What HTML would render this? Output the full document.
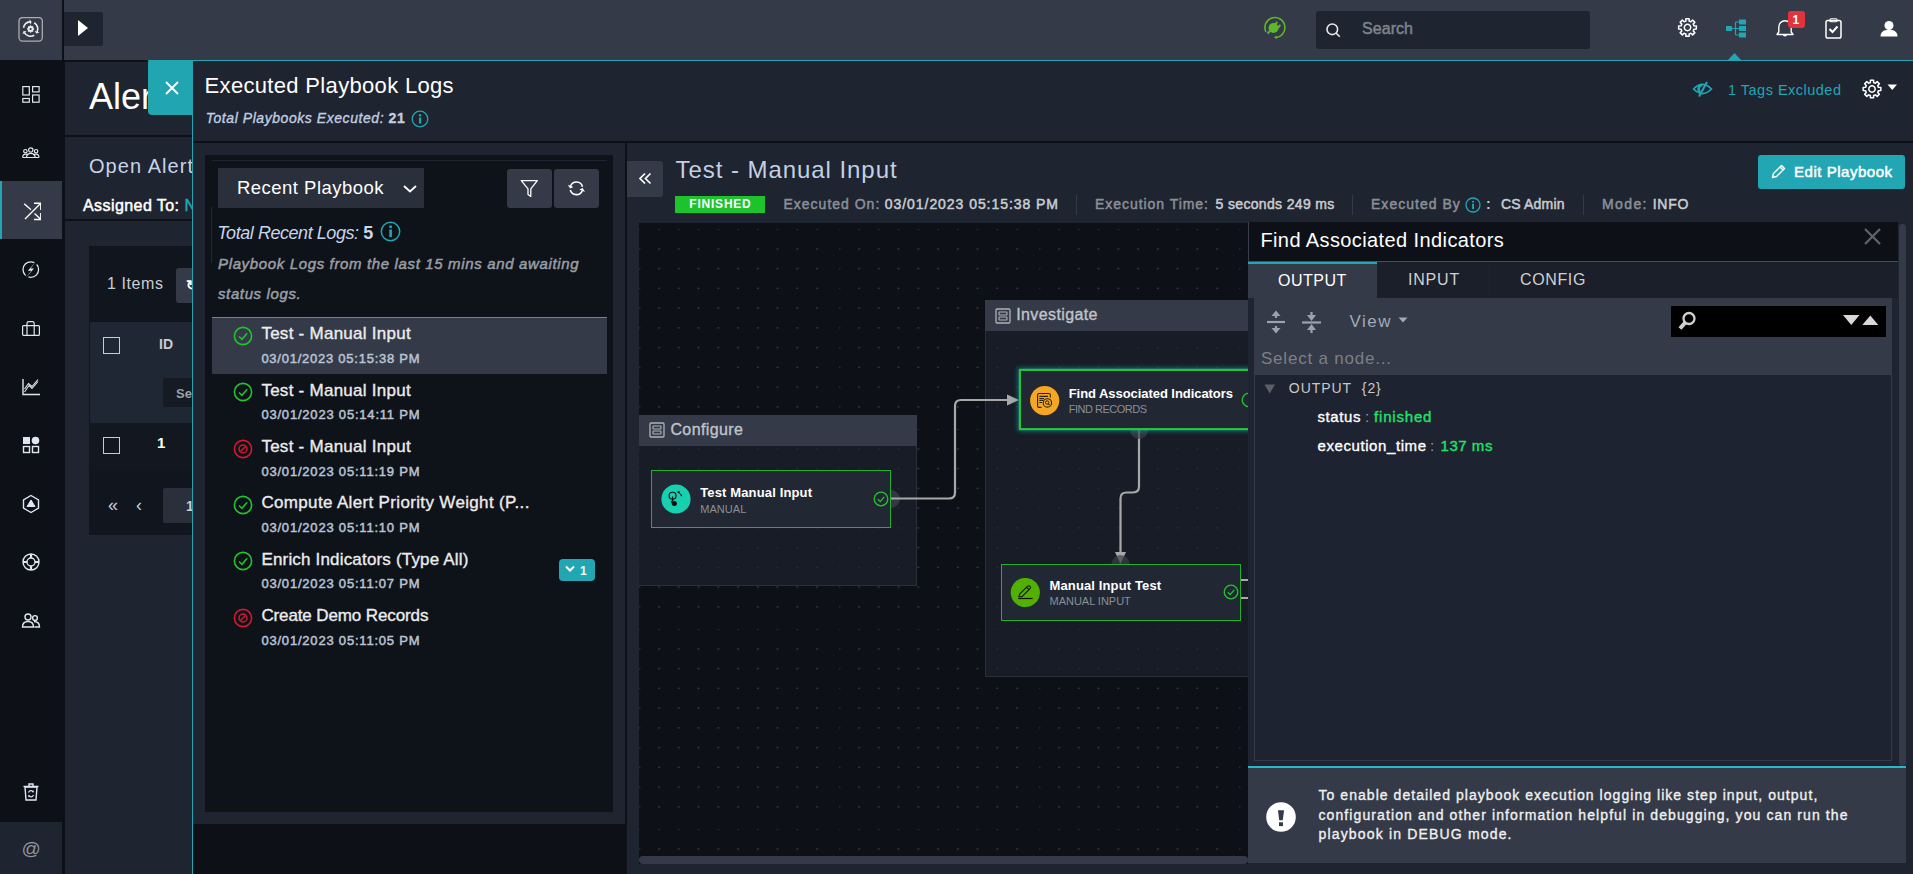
<!DOCTYPE html>
<html><head><meta charset="utf-8">
<style>
*{box-sizing:border-box;margin:0;padding:0}
html,body{width:1913px;height:874px;overflow:hidden;background:#1e2430;font-family:"Liberation Sans",sans-serif;color:#fff}
.r{position:absolute}
.t{position:absolute;line-height:1;white-space:nowrap}
</style></head><body>
<div class="r" style="left:0px;top:0px;width:1913px;height:60px;background:#343a47;"></div>
<div class="r" style="left:0px;top:60px;width:1913px;height:2px;background:#0d1117;"></div>
<div class="r" style="left:62px;top:0px;width:2px;height:60px;background:#0d1117;"></div>
<svg class="r" style="left:18px;top:17px;" width="26" height="26" viewBox="0 0 26 26"><rect x="1" y="0.5" width="23.3" height="23.6" rx="3.5" fill="none" stroke="#a9adb4" stroke-width="1.3"/><path d="M5.51 10.75 A7.2 7.2 0 0 1 11.97 4.83" fill="none" stroke="#eceef0" stroke-width="1.6"/><path d="M13.73 4.89 L11.41 2.27 L12.04 7.43Z" fill="#eceef0"/><path d="M16.20 5.76 A7.2 7.2 0 0 1 19.13 15.04" fill="none" stroke="#eceef0" stroke-width="1.6"/><path d="M18.20 16.53 L21.62 15.83 L16.83 13.80Z" fill="#eceef0"/><path d="M16.20 18.24 A7.2 7.2 0 0 1 6.36 15.60" fill="none" stroke="#eceef0" stroke-width="1.6"/><path d="M5.68 13.98 L4.29 17.19 L8.70 14.44Z" fill="#eceef0"/><path d="M12.60 8.10 L13.71 9.32 L15.36 9.24 L15.28 10.89 L16.50 12.00 L15.28 13.11 L15.36 14.76 L13.71 14.68 L12.60 15.90 L11.49 14.68 L9.84 14.76 L9.92 13.11 L8.70 12.00 L9.92 10.89 L9.84 9.24 L11.49 9.32Z" fill="#eceef0"/><circle cx="12.6" cy="12.0" r="1.1" fill="#343a47"/></svg>
<div class="r" style="left:64px;top:12px;width:39px;height:34px;background:#1e2430;border-radius:0 2px 2px 0"></div>
<svg class="r" style="left:77px;top:19px;" width="13" height="18" viewBox="0 0 13 18"><path d="M1 1 L11 9 L1 17Z" fill="#fff"/></svg>
<svg class="r" style="left:1262px;top:16px;" width="24" height="23" viewBox="0 0 24 23"><path d="M4 16 A10 10 0 1 1 13 21.5" fill="none" stroke="#5cb82a" stroke-width="1.6"/><path d="M12 21.5 L14.5 19.5 L14.5 23Z" fill="#5cb82a"/><circle cx="11.5" cy="12" r="5" fill="#5cb82a"/><rect x="13" y="5.5" width="2" height="4" fill="#5cb82a" transform="rotate(40 14 7.5)"/><rect x="16" y="8.5" width="2" height="4" fill="#5cb82a" transform="rotate(40 17 10.5)"/><path d="M8 15 L5.5 17.5" stroke="#5cb82a" stroke-width="2"/></svg>
<div class="r" style="left:1316px;top:11px;width:274px;height:38px;background:#1e2430;border-radius:3px"></div>
<svg class="r" style="left:1326px;top:23px;" width="15" height="15" viewBox="0 0 15 15"><circle cx="6.3" cy="6.3" r="5.3" fill="none" stroke="#e8e8e8" stroke-width="1.6"/><path d="M10 10 L13.8 13.8" stroke="#e8e8e8" stroke-width="1.6"/></svg>
<div class="t" style="left:1362px;top:20.66px;font-size:16px;color:#7d838c;font-weight:400;letter-spacing:0.059px;-webkit-text-stroke:0.5px currentColor;">Search</div>
<svg class="r" style="left:1676.8px;top:17px;" width="21" height="21" viewBox="0 0 21 21"><g transform="translate(10.5 10.5)"><path d="M-2.14 -6.24 L-1.64 -6.39 L-1.58 -8.86 L1.58 -8.86 L1.64 -6.39 L2.14 -6.24 L2.90 -5.93 L3.36 -5.68 L5.15 -7.38 L7.38 -5.15 L5.68 -3.36 L5.93 -2.90 L6.24 -2.14 L6.39 -1.64 L8.86 -1.58 L8.86 1.58 L6.39 1.64 L6.24 2.14 L5.93 2.90 L5.68 3.36 L7.38 5.15 L5.15 7.38 L3.36 5.68 L2.90 5.93 L2.14 6.24 L1.64 6.39 L1.58 8.86 L-1.58 8.86 L-1.64 6.39 L-2.14 6.24 L-2.90 5.93 L-3.36 5.68 L-5.15 7.38 L-7.38 5.15 L-5.68 3.36 L-5.93 2.90 L-6.24 2.14 L-6.39 1.64 L-8.86 1.58 L-8.86 -1.58 L-6.39 -1.64 L-6.24 -2.14 L-5.93 -2.90 L-5.68 -3.36 L-7.38 -5.15 L-5.15 -7.38 L-3.36 -5.68 L-2.90 -5.93Z" fill="none" stroke="#fff" stroke-width="1.5" stroke-linejoin="round"/><circle r="3.2" fill="none" stroke="#fff" stroke-width="1.5"/></g></svg>
<svg class="r" style="left:1726px;top:19px;" width="21" height="19" viewBox="0 0 21 19"><rect x="0" y="7" width="6" height="5" fill="#22a6b3"/><rect x="13" y="0.5" width="7" height="5" fill="#22a6b3"/><rect x="13" y="7" width="7" height="5" fill="#22a6b3"/><rect x="13" y="13.5" width="7" height="5" fill="#22a6b3"/><path d="M6 9.5 H9.5 M9.5 3 V16 M9.5 3 H13 M9.5 9.5 H13 M9.5 16 H13" fill="none" stroke="#22a6b3" stroke-width="1.2"/></svg>
<svg class="r" style="left:1727px;top:53px;" width="16" height="8" viewBox="0 0 16 8"><path d="M0 8 L7.5 0 L15 8Z" fill="#22a6b3"/></svg>
<svg class="r" style="left:1775px;top:18px;" width="21" height="21" viewBox="0 0 21 21"><path d="M2 16.5 L3.8 14 L3.8 9 A6.2 6.2 0 0 1 16.2 9 L16.2 14 L18 16.5Z" fill="none" stroke="#fff" stroke-width="1.4" stroke-linejoin="round"/><path d="M8.3 16.5 A1.8 1.8 0 0 0 11.7 16.5" fill="none" stroke="#fff" stroke-width="1.4"/></svg>
<div class="r" style="left:1788px;top:11px;width:17px;height:17px;background:#e0333c;border-radius:3px"></div>
<div class="t" style="left:1792.5px;top:13.84px;font-size:12px;color:#fff;font-weight:700;">1</div>
<svg class="r" style="left:1825px;top:18px;" width="18" height="21" viewBox="0 0 18 21"><rect x="1" y="2.5" width="15" height="17.5" rx="1.8" fill="none" stroke="#fff" stroke-width="1.5"/><rect x="5" y="0.8" width="7" height="3" rx="1" fill="none" stroke="#fff" stroke-width="1.1"/><path d="M4.5 11 L7.5 14 L12.5 8.5" fill="none" stroke="#fff" stroke-width="2"/></svg>
<svg class="r" style="left:1880px;top:20px;" width="18" height="17" viewBox="0 0 18 17"><circle cx="9" cy="5.5" r="4.5" fill="#fff"/><path d="M0.5 16.5 Q0.5 11 6 10 L12 10 Q17.5 11 17.5 16.5Z" fill="#fff"/></svg>
<div class="r" style="left:0px;top:62px;width:65px;height:812px;background:#0d1117;"></div>
<div class="r" style="left:0px;top:181px;width:62px;height:58px;background:#343a47;"></div>
<div class="r" style="left:0px;top:181px;width:2px;height:58px;background:#22a6b3;"></div>
<div class="r" style="left:0px;top:822px;width:62px;height:52px;background:#1e2430;"></div>
<svg class="r" style="left:21.0px;top:84.0px;" width="20" height="20" viewBox="0 0 20 20"><rect x="1.8" y="2.6" width="6.5" height="8.4" fill="none" stroke="#dfe6f2" stroke-width="1.2"/><rect x="11.6" y="2.6" width="6.5" height="5.3" fill="none" stroke="#dfe6f2" stroke-width="1.2"/><rect x="1.8" y="14.5" width="6.5" height="3.7" fill="none" stroke="#dfe6f2" stroke-width="1.2"/><rect x="11.6" y="11" width="6.5" height="7.2" fill="none" stroke="#dfe6f2" stroke-width="1.2"/></svg>
<svg class="r" style="left:21.0px;top:147.0px;" width="20" height="12" viewBox="0 0 20 12"><circle cx="4.4" cy="4.2" r="1.7" fill="none" stroke="#dfe6f2" stroke-width="1.2"/><circle cx="9.8" cy="3.0" r="2.2" fill="none" stroke="#dfe6f2" stroke-width="1.2"/><circle cx="15.1" cy="4.2" r="1.7" fill="none" stroke="#dfe6f2" stroke-width="1.2"/><path d="M1.6 10.4 Q1.8 7.1 4.6 7.1 Q6.5 7.1 7.2 8.3 M18 10.4 Q17.8 7.1 15 7.1 Q13.1 7.1 12.4 8.3 M5.4 10.4 Q5.8 6.4 9.8 6.4 Q13.8 6.4 14.2 10.4 M1.4 10.5 H18.2" fill="none" stroke="#dfe6f2" stroke-width="1.2"/></svg>
<svg class="r" style="left:21.0px;top:201.0px;" width="20" height="20" viewBox="0 0 20 20"><path d="M4 18 L19.5 2.5 M13 2.2 H19.8 V9 M3.2 2.8 L10 8.8 M13.5 12.5 L19.5 18 M13 18.5 H19.8 V12" fill="none" stroke="#fff" stroke-width="1.4"/></svg>
<svg class="r" style="left:21.0px;top:260.0px;" width="20" height="20" viewBox="0 0 20 20"><circle cx="9.8" cy="9.6" r="7.8" fill="none" stroke="#dfe6f2" stroke-width="1.3"/><path d="M16.5 0.5 L4.5 18.5" stroke="#0d1117" stroke-width="3"/><path d="M15.2 1.2 L6.8 10.8 H10.2 L4.6 18 L13 8.4 H9.6Z" fill="#dfe6f2"/></svg>
<svg class="r" style="left:21.0px;top:319.0px;" width="20" height="20" viewBox="0 0 20 20"><rect x="1.6" y="6.6" width="16.8" height="9.8" rx="1" fill="none" stroke="#dfe6f2" stroke-width="1.2"/><path d="M6 6.6 V4.4 Q6 2.6 7.8 2.6 H11.4 Q13.2 2.6 13.2 4.4 V6.6 M6 6.6 V16.4 M13.2 6.6 V16.4" fill="none" stroke="#dfe6f2" stroke-width="1.2"/></svg>
<svg class="r" style="left:21.0px;top:377.0px;" width="20" height="20" viewBox="0 0 20 20"><path d="M2 2 V17.5 H19" fill="none" stroke="#dfe6f2" stroke-width="1.4"/><path d="M3.5 15 L8 8.5 L11 11.5 L17 4.5 M3.5 12 L7.5 6.5 L11 9.5 L17 2.5" fill="none" stroke="#dfe6f2" stroke-width="1.1"/></svg>
<svg class="r" style="left:21.0px;top:435.0px;" width="20" height="20" viewBox="0 0 20 20"><rect x="2" y="2" width="7" height="7" fill="#dfe6f2"/><circle cx="14.5" cy="5.5" r="3.8" fill="#dfe6f2"/><rect x="2.5" y="11.5" width="6" height="6" fill="none" stroke="#dfe6f2" stroke-width="1.4"/><rect x="11.5" y="11.5" width="6" height="6" fill="none" stroke="#dfe6f2" stroke-width="1.4"/></svg>
<svg class="r" style="left:21.0px;top:494.0px;" width="20" height="20" viewBox="0 0 20 20"><path d="M10 1.5 L17.5 5.8 V14.2 L10 18.5 L2.5 14.2 V5.8Z" fill="none" stroke="#dfe6f2" stroke-width="1.4"/><path d="M10 6 L14 12.5 H6Z M10 6 V10 L6 12.5 M10 10 L14 12.5" fill="#dfe6f2" stroke="#dfe6f2" stroke-width="1"/></svg>
<svg class="r" style="left:21.0px;top:552.0px;" width="20" height="20" viewBox="0 0 20 20"><circle cx="10" cy="10" r="8" fill="none" stroke="#dfe6f2" stroke-width="1.4"/><circle cx="10" cy="10" r="4" fill="none" stroke="#dfe6f2" stroke-width="1.4"/><path d="M10 2 V6 M10 14 V18 M2 10 H6 M14 10 H18" fill="none" stroke="#dfe6f2" stroke-width="2.2"/></svg>
<svg class="r" style="left:21.0px;top:611.0px;" width="20" height="20" viewBox="0 0 20 20"><circle cx="7" cy="6" r="3" fill="none" stroke="#dfe6f2" stroke-width="1.4"/><circle cx="14" cy="7" r="2.4" fill="none" stroke="#dfe6f2" stroke-width="1.4"/><path d="M1.5 16 Q1.5 10.5 7 10.5 Q12.5 10.5 12.5 16Z M13 10.5 Q18.5 10.5 18.5 16 H13.5" fill="none" stroke="#dfe6f2" stroke-width="1.4"/></svg>
<svg class="r" style="left:21.0px;top:782.0px;" width="20" height="20" viewBox="0 0 20 20"><path d="M4 5 H16 L15 18 H5Z" fill="none" stroke="#dfe6f2" stroke-width="1.4"/><path d="M2.5 4.5 H17.5 M8 4.5 V2 H12 V4.5" fill="none" stroke="#dfe6f2" stroke-width="1.4"/><path d="M7.5 10.5 A2.6 2.6 0 0 1 12.3 10 M12.5 13 A2.6 2.6 0 0 1 7.7 13.5" fill="none" stroke="#dfe6f2" stroke-width="1.1"/><path d="M12.8 8.3 L12.6 10.6 L10.6 10Z M7.2 15.2 L7.4 12.9 L9.4 13.5Z" fill="#dfe6f2"/></svg>
<div class="t" style="left:21.5px;top:838.92px;font-size:19px;color:#8e949c;font-weight:400;">@</div>
<div class="r" style="left:65px;top:62px;width:127px;height:812px;background:#1e2430;"></div>
<div class="r" style="left:65px;top:135px;width:127px;height:2px;background:#0d1117;"></div>
<div class="r" style="left:65px;top:219px;width:127px;height:2px;background:#0d1117;"></div>
<div class="t" style="left:89px;top:78.53px;font-size:36px;color:#fff;font-weight:400;">Alerts</div>
<div class="t" style="left:89px;top:156.07px;font-size:20px;color:#c8d3e8;font-weight:400;letter-spacing:1.055px;">Open Alert</div>
<div class="t" style="left:83px;top:197.96px;font-size:16px;color:#fff;font-weight:400;letter-spacing:0.424px;-webkit-text-stroke:0.5px currentColor;">Assigned To:</div>
<div class="t" style="left:184.5px;top:197.96px;font-size:16px;color:#22a6b3;font-weight:400;-webkit-text-stroke:0.5px currentColor;">None</div>
<div class="r" style="left:89px;top:246px;width:110px;height:289px;background:#11161e;"></div>
<div class="t" style="left:107px;top:276.46px;font-size:16px;color:#c8ccd2;font-weight:400;letter-spacing:0.588px;">1 Items</div>
<div class="r" style="left:176px;top:268px;width:30px;height:35px;background:#343a47;border-radius:3px"></div>
<div class="t" style="left:186px;top:278.15px;font-size:14px;color:#fff;font-weight:700;">↻</div>
<div class="r" style="left:90px;top:322px;width:110px;height:101px;background:#1e2733;"></div>
<div class="r" style="left:103px;top:337px;width:17px;height:17px;background:none;border:1.3px solid #c8ccd2"></div>
<div class="t" style="left:159px;top:337.15px;font-size:14px;color:#c8ccd2;font-weight:700;">ID</div>
<div class="r" style="left:163px;top:378px;width:40px;height:29px;background:#161b23;border-radius:2px"></div>
<div class="t" style="left:176px;top:387.00px;font-size:13px;color:#9aa0aa;font-weight:700;">Search</div>
<div class="r" style="left:90px;top:423px;width:110px;height:48px;background:#121720;"></div>
<div class="r" style="left:103px;top:437px;width:17px;height:17px;background:none;border:1.3px solid #c8ccd2"></div>
<div class="t" style="left:157px;top:435.30px;font-size:15px;color:#fff;font-weight:700;">1</div>
<div class="t" style="left:108px;top:495.76px;font-size:18px;color:#c8ccd2;font-weight:400;">«</div>
<div class="t" style="left:136px;top:495.76px;font-size:18px;color:#c8ccd2;font-weight:400;">‹</div>
<div class="r" style="left:163px;top:488px;width:40px;height:35px;background:#2a303b;border-radius:2px"></div>
<div class="t" style="left:186px;top:499.15px;font-size:14px;color:#c8ccd2;font-weight:700;">1</div>
<div class="r" style="left:148px;top:60px;width:1765px;height:1px;background:#22a6b3;"></div>
<div class="r" style="left:192px;top:61px;width:1721px;height:813px;background:#1e2430;"></div>
<div class="r" style="left:192px;top:60px;width:1px;height:814px;background:#22a6b3;"></div>
<div class="r" style="left:148px;top:60px;width:45px;height:55px;background:#21a5b0;border-radius:3px 0 0 4px"></div>
<svg class="r" style="left:164px;top:80px;" width="16" height="16" viewBox="0 0 16 16"><path d="M2 2 L14 14 M14 2 L2 14" stroke="#fff" stroke-width="1.8"/></svg>
<div class="t" style="left:204.6px;top:75.38px;font-size:22px;color:#fff;font-weight:400;letter-spacing:0.326px;">Executed Playbook Logs</div>
<div class="t" style="left:205.7px;top:110.95px;font-size:14px;color:#c0cde0;font-weight:400;font-style:italic;letter-spacing:0.557px;-webkit-text-stroke:0.35px currentColor;">Total Playbooks Executed: <b style="font-style:normal">21</b></div>
<svg class="r" style="left:411px;top:110px;" width="18" height="18" viewBox="0 0 18 18"><circle cx="9" cy="9" r="7.8" fill="none" stroke="#22a6b3" stroke-width="1.3"/><rect x="8" y="7.5" width="2.2" height="6" fill="#22a6b3"/><circle cx="9.1" cy="5.2" r="1.2" fill="#22a6b3"/></svg>
<svg class="r" style="left:1692px;top:81px;" width="22" height="16" viewBox="0 0 22 16"><path d="M1.5 8 Q10.5 -1 19.5 8 Q10.5 17 1.5 8Z" fill="none" stroke="#22a6b3" stroke-width="1.7"/><path d="M10.5 4 A4 4 0 0 0 8 11" fill="none" stroke="#22a6b3" stroke-width="2.5"/><path d="M15 1 L7 15.5" stroke="#22a6b3" stroke-width="2"/></svg>
<div class="t" style="left:1728px;top:82.53px;font-size:14.5px;color:#22a6b3;font-weight:400;letter-spacing:0.489px;">1 Tags Excluded</div>
<svg class="r" style="left:1861px;top:78px;" width="22" height="22" viewBox="0 0 22 22"><g transform="translate(11 11)"><path d="M-2.14 -6.24 L-1.64 -6.39 L-1.58 -8.86 L1.58 -8.86 L1.64 -6.39 L2.14 -6.24 L2.90 -5.93 L3.36 -5.68 L5.15 -7.38 L7.38 -5.15 L5.68 -3.36 L5.93 -2.90 L6.24 -2.14 L6.39 -1.64 L8.86 -1.58 L8.86 1.58 L6.39 1.64 L6.24 2.14 L5.93 2.90 L5.68 3.36 L7.38 5.15 L5.15 7.38 L3.36 5.68 L2.90 5.93 L2.14 6.24 L1.64 6.39 L1.58 8.86 L-1.58 8.86 L-1.64 6.39 L-2.14 6.24 L-2.90 5.93 L-3.36 5.68 L-5.15 7.38 L-7.38 5.15 L-5.68 3.36 L-5.93 2.90 L-6.24 2.14 L-6.39 1.64 L-8.86 1.58 L-8.86 -1.58 L-6.39 -1.64 L-6.24 -2.14 L-5.93 -2.90 L-5.68 -3.36 L-7.38 -5.15 L-5.15 -7.38 L-3.36 -5.68 L-2.90 -5.93Z" fill="none" stroke="#fff" stroke-width="1.5" stroke-linejoin="round"/><circle r="3.2" fill="none" stroke="#fff" stroke-width="1.5"/></g></svg>
<svg class="r" style="left:1887px;top:84px;" width="11" height="7" viewBox="0 0 11 7"><path d="M0.5 0.5 H10 L5.25 6Z" fill="#fff"/></svg>
<div class="r" style="left:193px;top:141px;width:1720px;height:2px;background:#0d1117;"></div>
<div class="r" style="left:193px;top:824px;width:434px;height:50px;background:#0d1117;"></div>
<div class="r" style="left:625px;top:143px;width:2px;height:731px;background:#0d1117;"></div>
<div class="r" style="left:205px;top:155px;width:408px;height:657px;background:#0e1219;"></div>
<div class="r" style="left:212px;top:160px;width:395px;height:1px;background:#1f252e;"></div>
<div class="r" style="left:211px;top:207px;width:1px;height:56px;background:#1f2a33;"></div>
<div class="r" style="left:218px;top:168px;width:206px;height:40px;background:#2a303b;"></div>
<div class="t" style="left:237px;top:178.74px;font-size:18.5px;color:#fff;font-weight:400;letter-spacing:0.473px;">Recent Playbook</div>
<svg class="r" style="left:403px;top:185px;" width="14" height="8" viewBox="0 0 14 8"><path d="M1 1 L7 6.5 L13 1" fill="none" stroke="#fff" stroke-width="1.8"/></svg>
<div class="r" style="left:507px;top:169px;width:45px;height:39px;background:#343a47;border-radius:3px"></div>
<div class="r" style="left:554px;top:169px;width:45px;height:39px;background:#343a47;border-radius:3px"></div>
<svg class="r" style="left:519px;top:178px;" width="20" height="20" viewBox="0 0 20 20"><path d="M2.3 2.6 H18.3 L11.8 10.8 V18.4 L9 16.5 V10.8Z" fill="none" stroke="#fff" stroke-width="1.3" stroke-linejoin="round"/></svg>
<svg class="r" style="left:566px;top:179px;" width="21" height="20" viewBox="0 0 21 20"><path d="M4.48 7.15 A6.3 6.3 0 0 1 16.49 7.67" fill="none" stroke="#fff" stroke-width="1.6"/><path d="M4.10 9.52 L1.84 5.67 L7.36 8.01Z" fill="#fff"/><path d="M16.32 11.45 A6.3 6.3 0 0 1 4.31 10.93" fill="none" stroke="#fff" stroke-width="1.6"/><path d="M16.70 9.08 L18.96 12.93 L13.44 10.59Z" fill="#fff"/></svg>
<div class="t" style="left:217.2px;top:223.76px;font-size:18px;color:#c8d5ea;font-weight:400;font-style:italic;letter-spacing:-0.445px;">Total Recent Logs: <b style="font-style:normal">5</b></div>
<svg class="r" style="left:380px;top:221px;" width="21" height="21" viewBox="0 0 21 21"><circle cx="10.5" cy="10.5" r="9.2" fill="none" stroke="#22a6b3" stroke-width="1.5"/><rect x="9.3" y="8.5" width="2.6" height="7.5" fill="#22a6b3"/><circle cx="10.6" cy="5.8" r="1.5" fill="#22a6b3"/></svg>
<div class="t" style="left:218px;top:256.30px;font-size:15px;color:#9a9ea5;font-weight:400;font-style:italic;letter-spacing:0.645px;-webkit-text-stroke:0.5px currentColor;">Playbook Logs from the last 15 mins and awaiting</div>
<div class="t" style="left:218px;top:286.10px;font-size:15px;color:#9a9ea5;font-weight:400;font-style:italic;letter-spacing:0.621px;-webkit-text-stroke:0.5px currentColor;">status logs.</div>
<div class="r" style="left:212px;top:317px;width:395px;height:1px;background:#22a6b3;"></div>
<div class="r" style="left:212px;top:318px;width:395px;height:56px;background:#343a47;"></div>
<svg class="r" style="left:232.5px;top:325.9px;" width="20" height="20" viewBox="0 0 20 20"><circle cx="10" cy="10" r="8.6" fill="none" stroke="#22c32e" stroke-width="1.6"/><path d="M6 10.5 L9 13.3 L14.2 7.2" fill="none" stroke="#22c32e" stroke-width="1.5"/></svg>
<div class="t" style="left:261.4px;top:325.21px;font-size:17px;color:#ececec;font-weight:400;letter-spacing:0.262px;-webkit-text-stroke:0.35px currentColor;">Test - Manual Input</div>
<div class="t" style="left:261.4px;top:352.00px;font-size:13px;color:#b8c2d3;font-weight:400;letter-spacing:0.753px;-webkit-text-stroke:0.5px currentColor;">03/01/2023 05:15:38 PM</div>
<svg class="r" style="left:232.5px;top:382.25px;" width="20" height="20" viewBox="0 0 20 20"><circle cx="10" cy="10" r="8.6" fill="none" stroke="#22c32e" stroke-width="1.6"/><path d="M6 10.5 L9 13.3 L14.2 7.2" fill="none" stroke="#22c32e" stroke-width="1.5"/></svg>
<div class="t" style="left:261.4px;top:381.56px;font-size:17px;color:#ececec;font-weight:400;letter-spacing:0.262px;-webkit-text-stroke:0.35px currentColor;">Test - Manual Input</div>
<div class="t" style="left:261.4px;top:408.35px;font-size:13px;color:#b8c2d3;font-weight:400;letter-spacing:0.799px;-webkit-text-stroke:0.5px currentColor;">03/01/2023 05:14:11 PM</div>
<svg class="r" style="left:232.5px;top:438.59999999999997px;" width="20" height="20" viewBox="0 0 20 20"><circle cx="10" cy="10" r="8.6" fill="none" stroke="#cf1a30" stroke-width="1.6"/><circle cx="10" cy="10" r="4" fill="none" stroke="#cf1a30" stroke-width="1.5"/><path d="M7.2 12.8 L12.8 7.2" stroke="#cf1a30" stroke-width="1.5"/></svg>
<div class="t" style="left:261.4px;top:437.91px;font-size:17px;color:#ececec;font-weight:400;letter-spacing:0.262px;-webkit-text-stroke:0.35px currentColor;">Test - Manual Input</div>
<div class="t" style="left:261.4px;top:464.70px;font-size:13px;color:#b8c2d3;font-weight:400;letter-spacing:0.799px;-webkit-text-stroke:0.5px currentColor;">03/01/2023 05:11:19 PM</div>
<svg class="r" style="left:232.5px;top:494.95px;" width="20" height="20" viewBox="0 0 20 20"><circle cx="10" cy="10" r="8.6" fill="none" stroke="#22c32e" stroke-width="1.6"/><path d="M6 10.5 L9 13.3 L14.2 7.2" fill="none" stroke="#22c32e" stroke-width="1.5"/></svg>
<div class="t" style="left:261.4px;top:494.26px;font-size:17px;color:#ececec;font-weight:400;letter-spacing:0.342px;-webkit-text-stroke:0.35px currentColor;">Compute Alert Priority Weight (P...</div>
<div class="t" style="left:261.4px;top:521.05px;font-size:13px;color:#b8c2d3;font-weight:400;letter-spacing:0.799px;-webkit-text-stroke:0.5px currentColor;">03/01/2023 05:11:10 PM</div>
<svg class="r" style="left:232.5px;top:551.3px;" width="20" height="20" viewBox="0 0 20 20"><circle cx="10" cy="10" r="8.6" fill="none" stroke="#22c32e" stroke-width="1.6"/><path d="M6 10.5 L9 13.3 L14.2 7.2" fill="none" stroke="#22c32e" stroke-width="1.5"/></svg>
<div class="t" style="left:261.4px;top:550.61px;font-size:17px;color:#ececec;font-weight:400;letter-spacing:0.178px;-webkit-text-stroke:0.35px currentColor;">Enrich Indicators (Type All)</div>
<div class="t" style="left:261.4px;top:577.40px;font-size:13px;color:#b8c2d3;font-weight:400;letter-spacing:0.799px;-webkit-text-stroke:0.5px currentColor;">03/01/2023 05:11:07 PM</div>
<svg class="r" style="left:232.5px;top:607.65px;" width="20" height="20" viewBox="0 0 20 20"><circle cx="10" cy="10" r="8.6" fill="none" stroke="#cf1a30" stroke-width="1.6"/><circle cx="10" cy="10" r="4" fill="none" stroke="#cf1a30" stroke-width="1.5"/><path d="M7.2 12.8 L12.8 7.2" stroke="#cf1a30" stroke-width="1.5"/></svg>
<div class="t" style="left:261.4px;top:606.96px;font-size:17px;color:#ececec;font-weight:400;letter-spacing:-0.118px;-webkit-text-stroke:0.35px currentColor;">Create Demo Records</div>
<div class="t" style="left:261.4px;top:633.75px;font-size:13px;color:#b8c2d3;font-weight:400;letter-spacing:0.799px;-webkit-text-stroke:0.5px currentColor;">03/01/2023 05:11:05 PM</div>
<div class="r" style="left:559px;top:559px;width:36px;height:22px;background:#22a6b3;border-radius:4px"></div>
<svg class="r" style="left:565px;top:565px;" width="10" height="8" viewBox="0 0 10 8"><path d="M1 1.5 L5 5.5 L9 1.5" fill="none" stroke="#fff" stroke-width="2"/></svg>
<div class="t" style="left:580px;top:565.34px;font-size:12px;color:#fff;font-weight:700;">1</div>
<div class="r" style="left:627px;top:161px;width:36px;height:36px;background:#343a47;border-radius:0 3px 3px 0"></div>
<svg class="r" style="left:638px;top:172px;" width="14" height="13" viewBox="0 0 14 13"><path d="M7 1.5 L2 6.5 L7 11.5 M12.5 1.5 L7.5 6.5 L12.5 11.5" fill="none" stroke="#fff" stroke-width="1.7"/></svg>
<div class="t" style="left:675.6px;top:158.48px;font-size:24px;color:#c3d0e3;font-weight:400;letter-spacing:0.938px;">Test - Manual Input</div>
<div class="r" style="left:675px;top:196px;width:90px;height:17px;background:#1ec22d;"></div>
<div class="t" style="left:689.3px;top:197.84px;font-size:12px;color:#fff;font-weight:700;letter-spacing:0.784px;">FINISHED</div>
<div class="t" style="left:783.5px;top:197.15px;font-size:14px;color:#8a8f96;font-weight:400;letter-spacing:0.997px;-webkit-text-stroke:0.5px currentColor;">Executed On:</div>
<div class="t" style="left:884.8px;top:197.15px;font-size:14px;color:#c8ccd2;font-weight:400;letter-spacing:0.945px;-webkit-text-stroke:0.5px currentColor;">03/01/2023 05:15:38 PM</div>
<div class="r" style="left:1076px;top:195px;width:1px;height:20px;background:#343a47;"></div>
<div class="t" style="left:1095px;top:197.15px;font-size:14px;color:#8a8f96;font-weight:400;letter-spacing:0.956px;-webkit-text-stroke:0.5px currentColor;">Execution Time:</div>
<div class="t" style="left:1215.6px;top:197.15px;font-size:14px;color:#c8ccd2;font-weight:400;letter-spacing:0.338px;-webkit-text-stroke:0.5px currentColor;">5 seconds 249 ms</div>
<div class="r" style="left:1352px;top:195px;width:1px;height:20px;background:#343a47;"></div>
<div class="t" style="left:1371px;top:197.15px;font-size:14px;color:#8a8f96;font-weight:400;letter-spacing:1.02px;-webkit-text-stroke:0.5px currentColor;">Executed By</div>
<svg class="r" style="left:1465px;top:197px;" width="16" height="16" viewBox="0 0 16 16"><circle cx="8" cy="8" r="7" fill="none" stroke="#22a6b3" stroke-width="1.3"/><rect x="7.1" y="6.8" width="1.9" height="5.2" fill="#22a6b3"/><circle cx="8.05" cy="4.7" r="1.05" fill="#22a6b3"/></svg>
<div class="t" style="left:1486px;top:197.15px;font-size:14px;color:#c8ccd2;font-weight:700;">:</div>
<div class="t" style="left:1501px;top:197.15px;font-size:14px;color:#c8ccd2;font-weight:400;letter-spacing:0.178px;-webkit-text-stroke:0.5px currentColor;">CS Admin</div>
<div class="r" style="left:1583px;top:195px;width:1px;height:20px;background:#343a47;"></div>
<div class="t" style="left:1602px;top:197.15px;font-size:14px;color:#8a8f96;font-weight:400;letter-spacing:1.395px;-webkit-text-stroke:0.5px currentColor;">Mode:</div>
<div class="t" style="left:1652.8px;top:197.15px;font-size:14px;color:#c8ccd2;font-weight:400;letter-spacing:0.681px;-webkit-text-stroke:0.5px currentColor;">INFO</div>
<div class="r" style="left:1758px;top:155px;width:147px;height:34px;background:#22a6b3;border-radius:3px"></div>
<svg class="r" style="left:1770px;top:164px;" width="16" height="16" viewBox="0 0 16 16"><path d="M2.5 13.5 L3.5 9.5 L11.5 1.5 L14.5 4.5 L6.5 12.5Z M10 3 L13 6" fill="none" stroke="#fff" stroke-width="1.5" stroke-linejoin="round"/></svg>
<div class="t" style="left:1794px;top:164.30px;font-size:15px;color:#fff;font-weight:400;letter-spacing:0.523px;-webkit-text-stroke:0.5px currentColor;">Edit Playbook</div>
<div class="r" style="left:639px;top:223px;width:609px;height:641px;background:#0d1117;"></div>
<svg class="r" style="left:639px;top:223px;" width="609" height="641" viewBox="0 0 609 641"><defs><pattern id="dp" x="0.3" y="6.1" width="200" height="200" patternUnits="userSpaceOnUse"><g fill="#4a4f58"><rect x="-0.60" y="-0.60" width="1.3" height="1.3"/><rect x="-0.60" y="19.15" width="1.3" height="1.3"/><rect x="-0.60" y="38.90" width="1.3" height="1.3"/><rect x="-0.60" y="58.65" width="1.3" height="1.3"/><rect x="-0.60" y="78.40" width="1.3" height="1.3"/><rect x="-0.60" y="98.15" width="1.3" height="1.3"/><rect x="-0.60" y="117.90" width="1.3" height="1.3"/><rect x="-0.60" y="137.65" width="1.3" height="1.3"/><rect x="-0.60" y="157.40" width="1.3" height="1.3"/><rect x="-0.60" y="177.15" width="1.3" height="1.3"/><rect x="19.15" y="-0.60" width="1.3" height="1.3"/><rect x="19.15" y="19.15" width="1.3" height="1.3"/><rect x="19.15" y="38.90" width="1.3" height="1.3"/><rect x="19.15" y="58.65" width="1.3" height="1.3"/><rect x="19.15" y="78.40" width="1.3" height="1.3"/><rect x="19.15" y="98.15" width="1.3" height="1.3"/><rect x="19.15" y="117.90" width="1.3" height="1.3"/><rect x="19.15" y="137.65" width="1.3" height="1.3"/><rect x="19.15" y="157.40" width="1.3" height="1.3"/><rect x="19.15" y="177.15" width="1.3" height="1.3"/><rect x="38.90" y="-0.60" width="1.3" height="1.3"/><rect x="38.90" y="19.15" width="1.3" height="1.3"/><rect x="38.90" y="38.90" width="1.3" height="1.3"/><rect x="38.90" y="58.65" width="1.3" height="1.3"/><rect x="38.90" y="78.40" width="1.3" height="1.3"/><rect x="38.90" y="98.15" width="1.3" height="1.3"/><rect x="38.90" y="117.90" width="1.3" height="1.3"/><rect x="38.90" y="137.65" width="1.3" height="1.3"/><rect x="38.90" y="157.40" width="1.3" height="1.3"/><rect x="38.90" y="177.15" width="1.3" height="1.3"/><rect x="58.65" y="-0.60" width="1.3" height="1.3"/><rect x="58.65" y="19.15" width="1.3" height="1.3"/><rect x="58.65" y="38.90" width="1.3" height="1.3"/><rect x="58.65" y="58.65" width="1.3" height="1.3"/><rect x="58.65" y="78.40" width="1.3" height="1.3"/><rect x="58.65" y="98.15" width="1.3" height="1.3"/><rect x="58.65" y="117.90" width="1.3" height="1.3"/><rect x="58.65" y="137.65" width="1.3" height="1.3"/><rect x="58.65" y="157.40" width="1.3" height="1.3"/><rect x="58.65" y="177.15" width="1.3" height="1.3"/><rect x="78.40" y="-0.60" width="1.3" height="1.3"/><rect x="78.40" y="19.15" width="1.3" height="1.3"/><rect x="78.40" y="38.90" width="1.3" height="1.3"/><rect x="78.40" y="58.65" width="1.3" height="1.3"/><rect x="78.40" y="78.40" width="1.3" height="1.3"/><rect x="78.40" y="98.15" width="1.3" height="1.3"/><rect x="78.40" y="117.90" width="1.3" height="1.3"/><rect x="78.40" y="137.65" width="1.3" height="1.3"/><rect x="78.40" y="157.40" width="1.3" height="1.3"/><rect x="78.40" y="177.15" width="1.3" height="1.3"/><rect x="98.15" y="-0.60" width="1.3" height="1.3"/><rect x="98.15" y="19.15" width="1.3" height="1.3"/><rect x="98.15" y="38.90" width="1.3" height="1.3"/><rect x="98.15" y="58.65" width="1.3" height="1.3"/><rect x="98.15" y="78.40" width="1.3" height="1.3"/><rect x="98.15" y="98.15" width="1.3" height="1.3"/><rect x="98.15" y="117.90" width="1.3" height="1.3"/><rect x="98.15" y="137.65" width="1.3" height="1.3"/><rect x="98.15" y="157.40" width="1.3" height="1.3"/><rect x="98.15" y="177.15" width="1.3" height="1.3"/><rect x="117.90" y="-0.60" width="1.3" height="1.3"/><rect x="117.90" y="19.15" width="1.3" height="1.3"/><rect x="117.90" y="38.90" width="1.3" height="1.3"/><rect x="117.90" y="58.65" width="1.3" height="1.3"/><rect x="117.90" y="78.40" width="1.3" height="1.3"/><rect x="117.90" y="98.15" width="1.3" height="1.3"/><rect x="117.90" y="117.90" width="1.3" height="1.3"/><rect x="117.90" y="137.65" width="1.3" height="1.3"/><rect x="117.90" y="157.40" width="1.3" height="1.3"/><rect x="117.90" y="177.15" width="1.3" height="1.3"/><rect x="137.65" y="-0.60" width="1.3" height="1.3"/><rect x="137.65" y="19.15" width="1.3" height="1.3"/><rect x="137.65" y="38.90" width="1.3" height="1.3"/><rect x="137.65" y="58.65" width="1.3" height="1.3"/><rect x="137.65" y="78.40" width="1.3" height="1.3"/><rect x="137.65" y="98.15" width="1.3" height="1.3"/><rect x="137.65" y="117.90" width="1.3" height="1.3"/><rect x="137.65" y="137.65" width="1.3" height="1.3"/><rect x="137.65" y="157.40" width="1.3" height="1.3"/><rect x="137.65" y="177.15" width="1.3" height="1.3"/><rect x="157.40" y="-0.60" width="1.3" height="1.3"/><rect x="157.40" y="19.15" width="1.3" height="1.3"/><rect x="157.40" y="38.90" width="1.3" height="1.3"/><rect x="157.40" y="58.65" width="1.3" height="1.3"/><rect x="157.40" y="78.40" width="1.3" height="1.3"/><rect x="157.40" y="98.15" width="1.3" height="1.3"/><rect x="157.40" y="117.90" width="1.3" height="1.3"/><rect x="157.40" y="137.65" width="1.3" height="1.3"/><rect x="157.40" y="157.40" width="1.3" height="1.3"/><rect x="157.40" y="177.15" width="1.3" height="1.3"/><rect x="177.15" y="-0.60" width="1.3" height="1.3"/><rect x="177.15" y="19.15" width="1.3" height="1.3"/><rect x="177.15" y="38.90" width="1.3" height="1.3"/><rect x="177.15" y="58.65" width="1.3" height="1.3"/><rect x="177.15" y="78.40" width="1.3" height="1.3"/><rect x="177.15" y="98.15" width="1.3" height="1.3"/><rect x="177.15" y="117.90" width="1.3" height="1.3"/><rect x="177.15" y="137.65" width="1.3" height="1.3"/><rect x="177.15" y="157.40" width="1.3" height="1.3"/><rect x="177.15" y="177.15" width="1.3" height="1.3"/></g></pattern></defs><rect width="609" height="641" fill="url(#dp)"/></svg>
<div class="r" style="left:639px;top:856px;width:609px;height:8px;background:#343a47;border-radius:4px"></div>
<div class="r" style="left:639px;top:446px;width:278px;height:140px;background:rgba(30,36,48,0.6);border-right:1px solid #2a2f38;border-bottom:1px solid #2a2f38"></div>
<div class="r" style="left:639px;top:415px;width:278px;height:31px;background:#343a47;"></div>
<svg class="r" style="left:649px;top:422px;" width="16" height="16" viewBox="0 0 16 16"><rect x="1" y="1" width="14" height="14" rx="1" fill="none" stroke="#aeb2b8" stroke-width="1.3"/><rect x="4" y="4" width="8" height="3" rx="0.5" fill="none" stroke="#aeb2b8" stroke-width="1.1"/><rect x="4" y="9" width="8" height="3" rx="0.5" fill="none" stroke="#aeb2b8" stroke-width="1.1"/></svg>
<div class="t" style="left:670.4px;top:421.86px;font-size:16px;color:#c0c4ca;font-weight:400;letter-spacing:0.402px;-webkit-text-stroke:0.35px currentColor;">Configure</div>
<div class="r" style="left:985px;top:331px;width:263px;height:346px;background:rgba(30,36,48,0.6);border-left:1px solid #2a2f38;border-bottom:1px solid #2a2f38"></div>
<div class="r" style="left:985px;top:300px;width:263px;height:31px;background:#343a47;"></div>
<svg class="r" style="left:994.5px;top:307.5px;" width="16" height="16" viewBox="0 0 16 16"><rect x="1" y="1" width="14" height="14" rx="1" fill="none" stroke="#aeb2b8" stroke-width="1.3"/><rect x="4" y="4" width="8" height="3" rx="0.5" fill="none" stroke="#aeb2b8" stroke-width="1.1"/><rect x="4" y="9" width="8" height="3" rx="0.5" fill="none" stroke="#aeb2b8" stroke-width="1.1"/></svg>
<div class="t" style="left:1016.2px;top:306.96px;font-size:16px;color:#c0c4ca;font-weight:400;letter-spacing:0.391px;-webkit-text-stroke:0.35px currentColor;">Investigate</div>
<svg class="r" style="left:880px;top:380px;" width="280" height="200" viewBox="0 0 280 200"><circle cx="11" cy="119" r="9" fill="#3a3f48" opacity="0.8"/><path d="M11 118.5 H69 Q75 118.5 75 112.5 V26 Q75 20 81 20 H130" fill="none" stroke="#a8a8a8" stroke-width="2.2"/><path d="M127 14.5 L139 20 L127 25.5Z" fill="#a8a8a8"/><path d="M259 50 V106.6 Q259 112.5 253 112.5 H246.5 Q240.5 112.5 240.5 118.5 V174" fill="none" stroke="#a8a8a8" stroke-width="2.2"/><path d="M235 172 L240.5 184 L246 172Z" fill="#a8a8a8"/></svg>
<svg class="r" style="left:1100px;top:544px;" width="40" height="40" viewBox="0 0 40 40"><circle cx="20.5" cy="20" r="9" fill="#3a3f48" opacity="0.7"/></svg>
<svg class="r" style="left:1120px;top:415px;" width="40" height="40" viewBox="0 0 40 40"><circle cx="19" cy="15" r="9" fill="#3a3f48" opacity="0.7"/></svg>
<div class="r" style="left:651px;top:470px;width:240px;height:58px;background:#212834;border:1.5px solid #22b02e"></div>
<svg class="r" style="left:661px;top:483.8px;" width="30" height="30" viewBox="0 0 30 30"><circle cx="15" cy="15" r="14.6" fill="#17d0b0"/><circle cx="11.6" cy="11.8" r="3.5" fill="none" stroke="#111" stroke-width="1.1"/><circle cx="17.6" cy="8.1" r="1.2" fill="#111"/><path d="M17.6 8.1 L20.5 11.4" stroke="#111" stroke-width="0.9"/><path d="M19.3 11.8 L21.2 12.4 L20.6 10.5Z" fill="#111"/><path d="M11.6 12.5 V17.5" stroke="#111" stroke-width="1.3"/><ellipse cx="13.3" cy="19.4" rx="2.6" ry="2.5" fill="#111"/><path d="M10.2 17.2 L12 19.6" stroke="#111" stroke-width="1.2"/></svg>
<div class="t" style="left:700.2px;top:486.40px;font-size:13px;color:#fff;font-weight:700;letter-spacing:0.141px;">Test Manual Input</div>
<div class="t" style="left:700.2px;top:503.99px;font-size:11px;color:#8a8f96;font-weight:400;letter-spacing:0.069px;">MANUAL</div>
<svg class="r" style="left:873px;top:491px;" width="16" height="16" viewBox="0 0 16 16"><circle cx="8" cy="8" r="6.8" fill="none" stroke="#22c32e" stroke-width="1.3"/><path d="M4.8 8.3 L7.2 10.6 L11.3 5.8" fill="none" stroke="#22c32e" stroke-width="1.3"/></svg>
<div class="r" style="left:1020px;top:370px;width:240px;height:59px;background:#212834;border:1.5px solid #22c32e;box-shadow:0 0 0 1.2px #1bb5b0,0 0 5px 2px rgba(27,181,176,0.55)"></div>
<svg class="r" style="left:1030px;top:386px;" width="30" height="30" viewBox="0 0 30 30"><circle cx="14.7" cy="14.6" r="14.6" fill="#f5a623"/><path d="M11.5 21.4 H9 Q7.6 21.4 7.6 20 V8.9 Q7.6 7.5 9 7.5 H19 Q20.3 7.5 20.3 8.9 V11.5" fill="none" stroke="#2a2417" stroke-width="1.1"/><path d="M9.3 10.4 H18 M9.3 12.6 H14 M9.3 14.5 H13 M9.3 16.5 H12" stroke="#2a2417" stroke-width="1.1"/><circle cx="17.4" cy="16.9" r="4.2" fill="#f5a623" stroke="#2a2417" stroke-width="1.1"/><circle cx="17.1" cy="16.5" r="1.7" fill="none" stroke="#2a2417" stroke-width="1"/><path d="M18.3 17.7 L19.6 19" stroke="#2a2417" stroke-width="1.1"/></svg>
<div class="t" style="left:1068.7px;top:387.00px;font-size:13px;color:#fff;font-weight:700;letter-spacing:-0.055px;">Find Associated Indicators</div>
<div class="t" style="left:1068.7px;top:403.89px;font-size:11px;color:#8a8f96;font-weight:400;letter-spacing:-0.493px;">FIND RECORDS</div>
<svg class="r" style="left:1241px;top:392px;" width="16" height="16" viewBox="0 0 16 16"><circle cx="8" cy="8" r="6.8" fill="none" stroke="#22c32e" stroke-width="1.3"/></svg>
<div class="r" style="left:1000.7px;top:564px;width:240px;height:57px;background:#212834;border:1.5px solid #22b02e"></div>
<svg class="r" style="left:1010px;top:578px;" width="30" height="30" viewBox="0 0 30 30"><circle cx="15.3" cy="14.5" r="14.6" fill="#52b000"/><path d="M8.8 18.8 L9.6 16.2 L17.6 8.2 Q18.9 7.2 20 8.3 Q21 9.4 20 10.6 L12 18.6Z M16.6 9.3 L19 11.6" fill="none" stroke="#111" stroke-width="1.1" stroke-linejoin="round"/><path d="M8.2 20.5 H22.6" stroke="#111" stroke-width="1.2"/></svg>
<div class="t" style="left:1049.5px;top:578.70px;font-size:13px;color:#fff;font-weight:700;letter-spacing:0.129px;">Manual Input Test</div>
<div class="t" style="left:1049.5px;top:596.19px;font-size:11px;color:#8a8f96;font-weight:400;letter-spacing:-0.018px;">MANUAL INPUT</div>
<svg class="r" style="left:1223px;top:584px;" width="16" height="16" viewBox="0 0 16 16"><circle cx="8" cy="8" r="6.8" fill="none" stroke="#22c32e" stroke-width="1.3"/><path d="M4.8 8.3 L7.2 10.6 L11.3 5.8" fill="none" stroke="#22c32e" stroke-width="1.3"/></svg>
<div class="r" style="left:1241px;top:579px;width:7px;height:2px;background:#a8a8a8;"></div>
<div class="r" style="left:1241px;top:597px;width:7px;height:2px;background:#a8a8a8;"></div>
<div class="r" style="left:1248px;top:222px;width:658px;height:646px;background:#1e2430;"></div>
<div class="r" style="left:1248px;top:222px;width:650px;height:40px;background:#0d1117;border-left:1px solid #3a404b"></div>
<div class="t" style="left:1260.4px;top:230.27px;font-size:20px;color:#fff;font-weight:400;letter-spacing:0.401px;">Find Associated Indicators</div>
<svg class="r" style="left:1863px;top:227px;" width="19" height="19" viewBox="0 0 19 19"><path d="M2 2 L17 17 M17 2 L2 17" stroke="#5e636b" stroke-width="2.3"/></svg>
<div class="r" style="left:1898px;top:222px;width:8px;height:546px;background:#1e2430;"></div>
<div class="r" style="left:1898.5px;top:224px;width:7.5px;height:542px;background:#343a47;border-radius:4px"></div>
<div class="r" style="left:1248px;top:262px;width:650px;height:36px;background:#1a1f29;"></div>
<div class="r" style="left:1248px;top:261px;width:650px;height:1px;background:#4a4f57;"></div>
<div class="r" style="left:1248px;top:262px;width:129px;height:2px;background:#22a6b3;"></div>
<div class="r" style="left:1248px;top:264px;width:129px;height:34px;background:#343a47;"></div>
<div class="t" style="left:1278px;top:273.26px;font-size:16px;color:#fff;font-weight:400;letter-spacing:0.524px;">OUTPUT</div>
<div class="t" style="left:1408px;top:272.26px;font-size:16px;color:#d0d0d0;font-weight:400;letter-spacing:0.8px;">INPUT</div>
<div class="t" style="left:1520px;top:272.26px;font-size:16px;color:#d0d0d0;font-weight:400;letter-spacing:0.636px;">CONFIG</div>
<div class="r" style="left:1489px;top:264px;width:1px;height:34px;background:#1e2430;"></div>
<div class="r" style="left:1254px;top:298px;width:638px;height:77px;background:#343a47;"></div>
<svg class="r" style="left:1266px;top:309px;" width="20" height="26" viewBox="0 0 20 26"><path d="M10 1.5 L5.5 7 H14.5Z M10 24.5 L5.5 19 H14.5Z" fill="#9ca2ab"/><path d="M1 13 H19" stroke="#9ca2ab" stroke-width="2.2"/><path d="M10 6 V9 M10 17 V20" stroke="#9ca2ab" stroke-width="2.2"/></svg>
<svg class="r" style="left:1301px;top:311px;" width="21" height="23" viewBox="0 0 21 23"><path d="M10.5 10 L6 4 H15Z M10.5 13 L6 19 H15Z" fill="#9ca2ab"/><path d="M1 11.5 H20" stroke="#9ca2ab" stroke-width="2.2"/><path d="M10.5 1 V5 M10.5 18 V22" stroke="#9ca2ab" stroke-width="2.2"/></svg>
<div class="t" style="left:1349.4px;top:313.11px;font-size:17px;color:#a0aab8;font-weight:400;letter-spacing:1.55px;">View</div>
<svg class="r" style="left:1398px;top:317px;" width="10" height="6" viewBox="0 0 10 6"><path d="M0.5 0.5 H9.5 L5 5.5Z" fill="#a0aab8"/></svg>
<div class="r" style="left:1671px;top:306px;width:215px;height:31px;background:#000;"></div>
<svg class="r" style="left:1676px;top:310px;" width="22" height="22" viewBox="0 0 22 22"><circle cx="13" cy="8.5" r="5.5" fill="none" stroke="#d0d0d0" stroke-width="2.3"/><path d="M9.3 12.5 L4 18.5" stroke="#d0d0d0" stroke-width="4"/></svg>
<svg class="r" style="left:1842px;top:314px;" width="38" height="12" viewBox="0 0 38 12"><path d="M1 1 H17.5 L9.25 11Z M20.3 11 L28.3 1.5 L36.3 11Z" fill="#d8d8d8"/></svg>
<div class="t" style="left:1261px;top:349.81px;font-size:17px;color:#7b8089;font-weight:400;letter-spacing:0.784px;">Select a node...</div>
<div class="r" style="left:1254px;top:375px;width:638px;height:386px;background:#1d2330;border:1px solid #343b47;border-top:none"></div>
<svg class="r" style="left:1264px;top:384px;" width="12" height="10" viewBox="0 0 12 10"><path d="M0.5 0.5 H11 L5.75 9.5Z" fill="#5b5f66"/></svg>
<div class="t" style="left:1288.8px;top:381.05px;font-size:14px;color:#c8c8c8;font-weight:400;letter-spacing:0.953px;">OUTPUT&nbsp; {2}</div>
<div class="t" style="left:1317.5px;top:409.30px;font-size:15px;color:#fff;font-weight:400;letter-spacing:0.575px;-webkit-text-stroke:0.35px currentColor;">status</div>
<div class="t" style="left:1365px;top:409.30px;font-size:15px;color:#9aa0aa;font-weight:400;">:</div>
<div class="t" style="left:1374px;top:409.30px;font-size:15px;color:#23e26b;font-weight:400;letter-spacing:0.813px;-webkit-text-stroke:0.35px currentColor;">finished</div>
<div class="t" style="left:1317.5px;top:438.00px;font-size:15px;color:#fff;font-weight:400;letter-spacing:0.584px;-webkit-text-stroke:0.35px currentColor;">execution_time</div>
<div class="t" style="left:1430px;top:438.00px;font-size:15px;color:#9aa0aa;font-weight:400;">:</div>
<div class="t" style="left:1440.5px;top:438.00px;font-size:15px;color:#23e26b;font-weight:400;letter-spacing:0.541px;-webkit-text-stroke:0.35px currentColor;">137 ms</div>
<div class="r" style="left:1248px;top:766px;width:658px;height:2px;background:#2ab8c8;"></div>
<div class="r" style="left:1248px;top:768px;width:658px;height:95px;background:#343a47;"></div>
<svg class="r" style="left:1266px;top:802px;" width="30" height="30" viewBox="0 0 30 30"><circle cx="15" cy="15" r="14.8" fill="#fff"/><path d="M12 8.3 H18 L16.8 18.3 H13.2Z" fill="#343a47"/><rect x="13" y="20.3" width="4" height="3.8" fill="#343a47"/></svg>
<div class="t" style="left:1318.5px;top:787.95px;font-size:14px;color:#f0f0f0;font-weight:400;letter-spacing:1.047px;-webkit-text-stroke:0.35px currentColor;">To enable detailed playbook execution logging like step input, output,</div>
<div class="t" style="left:1318.5px;top:807.65px;font-size:14px;color:#f0f0f0;font-weight:400;letter-spacing:1.098px;-webkit-text-stroke:0.35px currentColor;">configuration and other information helpful in debugging, you can run the</div>
<div class="t" style="left:1318.5px;top:827.35px;font-size:14px;color:#f0f0f0;font-weight:400;letter-spacing:1.168px;-webkit-text-stroke:0.35px currentColor;">playbook in DEBUG mode.</div>
</body></html>
